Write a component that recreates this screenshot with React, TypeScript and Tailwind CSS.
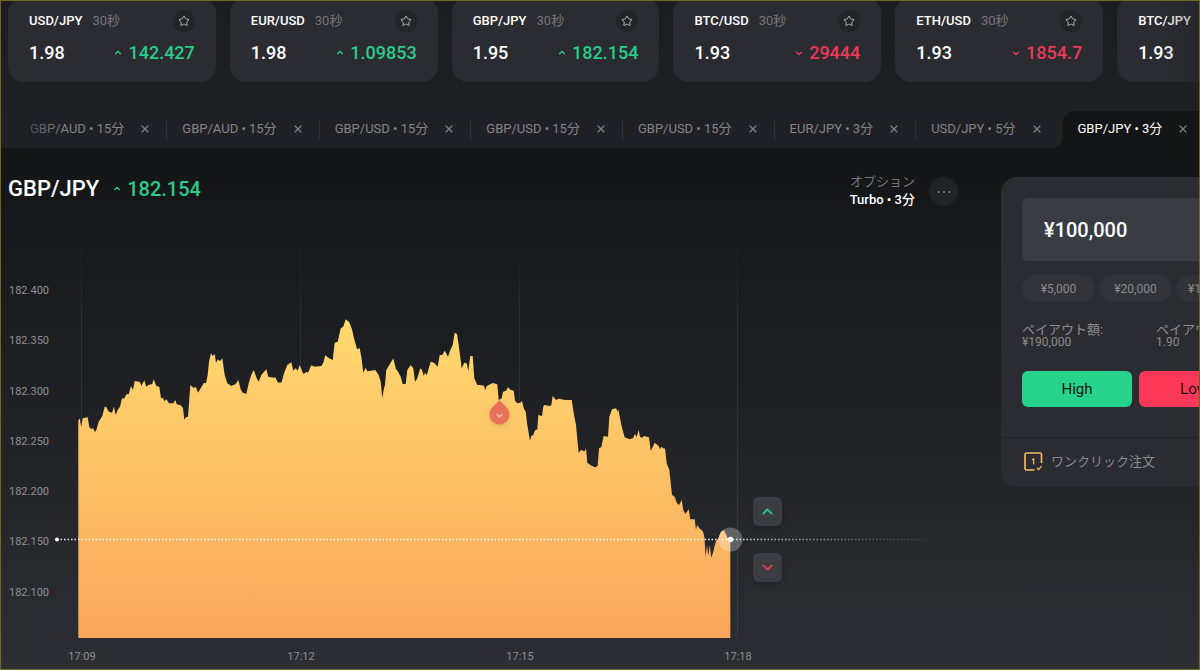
import React, { useState } from 'react';
import { ChevronDown, ChevronUp, Star, X } from 'lucide-react';
import { clsx } from 'clsx';

type Direction = 'up' | 'down';

interface Quote {
  pair: string;
  payout: string;
  price: string;
  direction: Direction;
}

interface Segment {
  origin: [number, number];
  points: string;
}

const quotes: Quote[] = [
  { pair: 'USD/JPY', payout: '1.98', price: '142.427', direction: 'up' },
  { pair: 'EUR/USD', payout: '1.98', price: '1.09853', direction: 'up' },
  { pair: 'GBP/JPY', payout: '1.95', price: '182.154', direction: 'up' },
  { pair: 'BTC/USD', payout: '1.93', price: '29444', direction: 'down' },
  { pair: 'ETH/USD', payout: '1.93', price: '1854.7', direction: 'down' },
  { pair: 'BTC/JPY', payout: '1.93', price: '4164900', direction: 'up' },
];

const tabs = [
  'GBP/AUD • 15分',
  'GBP/AUD • 15分',
  'GBP/USD • 15分',
  'GBP/USD • 15分',
  'GBP/USD • 15分',
  'EUR/JPY • 3分',
  'USD/JPY • 5分',
  'GBP/JPY • 3分',
];

const chips = ['¥5,000', '¥20,000', '¥100,000'];

const priceLabels = [
  { label: '182.400', y: 294 },
  { label: '182.350', y: 344 },
  { label: '182.300', y: 395 },
  { label: '182.250', y: 445 },
  { label: '182.200', y: 495 },
  { label: '182.150', y: 545 },
  { label: '182.100', y: 596 },
];

const timeLabels = [
  { label: '17:09', x: 82 },
  { label: '17:12', x: 301 },
  { label: '17:15', x: 520 },
  { label: '17:18', x: 738 },
];

// Ticks are stored per segment, in thirds of a chart unit from the segment origin
const segments: Segment[] = [
  {
    origin: [60, 310],
    points:
      '55,332 59,325 64,352 68,325 83,322 88,352 95,358 98,353 105,366 109,360 116,335 127,318 134,290 139,291 146,305 156,308 162,290 167,315 173,300 180,290 186,265 192,266 200,252 206,253 213,228 219,240 224,213 240,216 244,228 253,211 259,230 265,225 277,222 281,208 289,228 298,230 303,265 309,263 313,274 319,268 327,280 340,280 346,270 350,283 362,286 369,295 373,329 378,322 384,320 391,225 400,233 408,232 414,248 424,232 432,218 438,220 443,195 447,155 453,130 458,138 464,132 468,158 474,148 480,154 487,145 494,195 502,220 514,228 527,222 535,210 542,238 548,248 559,252 566,220 574,195 581,180 590,205 596,215 604,195 619,178 625,200 640,203 646,202 653,217',
  },
  {
    origin: [280, 310],
    points:
      '0,218 5,216 12,190 22,165 34,157 40,182 47,175 53,182 59,165 70,192 80,185 84,188 94,166 104,170 124,168 130,158 136,136 146,144 158,150 164,98 173,95 182,55 190,50 197,28 208,37 216,58 222,85 231,117 239,115 244,140 250,188 257,173 262,184 274,182 286,180 296,195 302,215 307,265 312,235 315,225 319,180 328,165 340,145 348,178 353,183 362,200 368,222 377,222 382,180 392,165 400,175 405,215 412,205 421,175 426,180 431,197 435,188 440,196 452,155 462,158 473,170 479,135 487,135 494,122 504,140 510,122 518,105 524,68 531,72 536,105 545,175 553,158 560,160 565,183 571,138 578,138 583,205 592,225',
  },
  {
    origin: [480, 370],
    points:
      '0,45 12,47 16,60 20,48 38,39 52,43 56,90 65,85 69,65 78,62 84,52 92,60 101,62 105,92 112,100 122,98 126,92 131,115 137,125 142,165 150,212 154,198 160,195 164,182 172,178 175,135 186,138 190,110 192,105 210,108 214,105 218,78 228,90 236,86 256,90 275,90 281,130 288,165 296,250 302,240 314,244 318,235 322,278 332,286 345,292 353,288 357,235 364,232 371,198 384,200 388,140 396,118 408,115 413,125 415,118 425,170 434,202 448,208 460,204 464,192 470,200 476,180 480,200 486,203 492,198 507,202 512,243 524,218 536,228 540,238 544,230 552,236',
  },
  {
    origin: [640, 430],
    points:
      '75,55 80,100 88,120 96,195 104,200 110,218 117,225 125,210 130,240 136,252 146,238 151,268 164,268 168,300 171,285 180,297 188,303 193,318 197,380 201,345 205,378 209,345 214,383 220,365 227,335 235,325 243,305 252,300 260,318 265,328 271,328',
  },
];

const BASELINE = 638;

const ticks = segments.flatMap(({ origin, points }) =>
  points.split(' ').map((point) => {
    const [x, y] = point.split(',').map(Number);
    return `${(origin[0] + x / 3).toFixed(1)},${(origin[1] + y / 3).toFixed(1)}`;
  })
);

const areaPath = `M78.3,${BASELINE} L${ticks.join(' L')} L730.3,${BASELINE} Z`;

function Trend({ direction }: { direction: Direction }) {
  return (
    <svg viewBox="0 0 8 8" className="size-2 shrink-0" fill="none" stroke="currentColor" strokeWidth="1.3">
      <path d={direction === 'up' ? 'M1.2 5 4 2.4 6.8 5' : 'M1.2 3 4 5.6 6.8 3'} />
    </svg>
  );
}

function QuoteCard({ quote }: { quote: Quote }) {
  return (
    <article className="rounded-2xl bg-[#2b2c31] px-[21px] pt-[13px] pb-[17px]">
      <div className="flex items-center">
        <h2 className="text-[13px] leading-5 font-medium text-white">{quote.pair}</h2>
        <span className="ml-2.5 text-[13px] leading-5 text-[#76777b]">30秒</span>
        <button
          type="button"
          aria-label={`${quote.pair} favorite`}
          className="ml-auto flex size-[22px] items-center justify-center rounded-full bg-[#232428] text-[#b4b5b8]"
        >
          <Star size={12} strokeWidth={2} />
        </button>
      </div>
      <div className="mt-[9px] flex items-center justify-between text-lg leading-6 font-medium">
        <span className="text-white">{quote.payout}</span>
        <span
          className={clsx(
            'flex items-center gap-1.5',
            quote.direction === 'up' ? 'text-[#2bcb8a]' : 'text-[#e83a58]'
          )}
        >
          <Trend direction={quote.direction} />
          {quote.price}
        </span>
      </div>
    </article>
  );
}

function TabBar() {
  const [active, setActive] = useState(tabs.length - 1);

  return (
    <nav className="relative flex h-[37px] pl-3.5 text-[13px]">
      {tabs.map((tab, index) => (
        <div
          key={index}
          className={clsx(
            'relative flex shrink-0 items-center gap-[15px] pr-4 pb-0.5 pl-[15px]',
            index === active ? 'ml-1 rounded-tl-xl bg-[#141517] text-white' : 'text-[#85868a]'
          )}
        >
          {index === active && (
            <span className="absolute bottom-0 -left-3 size-3 bg-[#141517]">
              <span className="block size-3 rounded-br-xl bg-[#202126]" />
            </span>
          )}
          <button type="button" onClick={() => setActive(index)} className="leading-5 whitespace-nowrap">
            {tab}
          </button>
          <button type="button" aria-label="閉じる" className="text-[#7f8084]">
            <X size={12} strokeWidth={2.5} />
          </button>
          {index < active - 1 && <span className="absolute right-0 h-5 w-px bg-[#303136]" />}
        </div>
      ))}
      <div className="pointer-events-none absolute inset-y-0 left-0 w-16 bg-linear-to-r from-[#202126] to-transparent" />
    </nav>
  );
}

function Chart() {
  return (
    <div className="relative">
      <svg viewBox="1 240 1000 429" className="block h-auto w-full">
        <defs>
          <linearGradient id="area" gradientUnits="userSpaceOnUse" x1="0" y1="320" x2="0" y2="638">
            <stop offset="0" stopColor="#ffd96f" />
            <stop offset="1" stopColor="#faa65c" />
          </linearGradient>
          <linearGradient id="grid" gradientUnits="userSpaceOnUse" x1="0" y1="240" x2="0" y2="320">
            <stop offset="0" stopColor="#fff" stopOpacity="0" />
            <stop offset="1" stopColor="#fff" stopOpacity="0.07" />
          </linearGradient>
          <linearGradient id="level" gradientUnits="userSpaceOnUse" x1="57" y1="0" x2="944" y2="0">
            <stop offset="0.76" stopColor="#fff" stopOpacity="0.9" />
            <stop offset="0.8" stopColor="#fff" stopOpacity="0.65" />
            <stop offset="1" stopColor="#fff" stopOpacity="0" />
          </linearGradient>
        </defs>

        {timeLabels.map(({ label, x }) => (
          <rect key={label} x={x - 1} y="240" width="1" height="398" fill="url(#grid)" />
        ))}

        <path d={areaPath} fill="url(#area)" />

        <g fill="#8f9094" fontSize="11">
          {priceLabels.map(({ label, y }) => (
            <text key={label} x="9" y={y}>
              {label}
            </text>
          ))}
          {timeLabels.map(({ label, x }) => (
            <text key={label} x={x} y="660" textAnchor="middle">
              {label}
            </text>
          ))}
        </g>

        {/* Open position */}
        <path
          d="M499.5 400 C502 404 509.5 407.5 509.5 414.5 A10 10 0 0 1 489.5 414.5 C489.5 407.5 497 404 499.5 400 Z"
          fill="#e8715a"
          className="drop-shadow-sm"
        />
        <path d="M496.5 414 499.5 416.8 502.5 414" fill="none" stroke="#fbc3b0" strokeWidth="1.3" />

        {/* Current price level */}
        <path d="M57 539.5H944" stroke="url(#level)" strokeWidth="1.4" strokeDasharray="1.6 1.9" />
        <circle cx="57" cy="539.5" r="2" fill="#fff" />
        <circle cx="730.5" cy="539.5" r="12" fill="#fff" fillOpacity="0.27" />
        <circle cx="730.5" cy="539.5" r="2.7" fill="#fff" />
      </svg>

      <div className="absolute top-[60%] left-[75.2%] flex flex-col gap-[27px]">
        <button
          type="button"
          aria-label="High"
          className="flex size-[29px] items-center justify-center rounded-md bg-[#3b3d43] text-[#2bcb8a] shadow-md"
        >
          <ChevronUp size={17} strokeWidth={2.5} />
        </button>
        <button
          type="button"
          aria-label="Low"
          className="flex size-[29px] items-center justify-center rounded-md bg-[#3b3d43] text-[#e83a58] shadow-md"
        >
          <ChevronDown size={17} strokeWidth={2.5} />
        </button>
      </div>
    </div>
  );
}

function OrderPanel() {
  const [amount, setAmount] = useState('¥100,000');

  return (
    <section className="w-[269px] rounded-2xl bg-[#2b2c31] text-[#8b8c90]">
      <div className="px-[21px] pt-[21px] pb-[30px]">
        <input
          type="text"
          aria-label="金額"
          value={amount}
          onChange={(e) => setAmount(e.target.value)}
          className="block h-[63px] w-full rounded-md bg-[#3a3c43] px-[22px] text-xl font-medium text-white outline-none"
        />
        <div className="mt-3.5 flex gap-1">
          {chips.map((chip) => (
            <button
              key={chip}
              type="button"
              onClick={() => setAmount(chip)}
              className="h-[27px] flex-1 rounded-full bg-[#323338] text-xs"
            >
              {chip}
            </button>
          ))}
        </div>
        <dl className="mt-[21px] flex text-xs leading-[13px]">
          <div className="w-[134px]">
            <dt className="text-[13px] leading-[13px]">ペイアウト額:</dt>
            <dd>¥190,000</dd>
          </div>
          <div>
            <dt className="text-[13px] leading-[13px]">ペイアウト率:</dt>
            <dd>1.90</dd>
          </div>
        </dl>
        <div className="mt-[22px] flex gap-[7px] text-[15px] text-[#101113]">
          <button type="button" className="h-9 flex-1 rounded-md bg-[#27d38c]">
            High
          </button>
          <button type="button" className="h-9 flex-1 rounded-md bg-[#fb3857]">
            Low
          </button>
        </div>
      </div>
      <button
        type="button"
        className="flex h-[50px] w-full items-center gap-2 border-t border-[#212226] px-[21px] pb-0.5 text-[13px]"
      >
        <svg viewBox="0 0 21 21" className="size-[21px]" fill="none" stroke="#f5c065" strokeWidth="1.6">
          <path d="M19.5 12V3.5A1.5 1.5 0 0 0 18 2H4.5A1.5 1.5 0 0 0 3 3.5V17.5A1.5 1.5 0 0 0 4.5 19H12.5" />
          <path d="M10 8.8 11.700 7.900V13.5" strokeWidth="1.2" />
          <path d="M15 17 16.6 18.6 19.6 15.2" strokeWidth="1.2" />
        </svg>
        ワンクリック注文
      </button>
    </section>
  );
}

export default function App() {
  return (
    <div className="flex min-h-screen flex-col overflow-hidden border border-[#6d6b22] bg-[#202126] font-[Roboto,'Noto_Sans_CJK_JP',sans-serif]">
      <header className="relative bg-linear-to-b from-[#1c1d20] to-[#202126]">
        <div className="-mt-1 mb-[29px] grid auto-cols-[17.45%] grid-flow-col gap-3.5 pl-[7px]">
          {quotes.map((quote) => (
            <QuoteCard key={quote.pair} quote={quote} />
          ))}
        </div>
        <div className="pointer-events-none absolute top-0 right-0 h-[82px] w-10 bg-linear-to-r from-transparent to-[#1e1f23]/40" />
        <TabBar />
      </header>

      <main className="flex flex-1 bg-linear-to-b from-[#141517] to-[#2d2e33]">
        <div className="min-w-0 flex-1">
          <div className="flex h-[92px] items-start pt-[29px] pr-[43px] pl-[7px]">
            <h1 className="text-[22px] leading-6 font-medium text-white">GBP/JPY</h1>
            <p className="ml-3.5 flex items-center gap-1.5 text-xl leading-6 font-medium text-[#2bcb8a]">
              <Trend direction="up" />
              182.154
            </p>
            <div className="ml-auto text-right text-[13px]">
              <p className="leading-[10px] text-[#76777b]">オプション</p>
              <p className="mt-[5px] leading-4 font-medium text-white">Turbo • 3分</p>
            </div>
            <button
              type="button"
              aria-label="メニュー"
              className="ml-3.5 flex size-[29px] items-center justify-center rounded-full bg-[#212226]"
            >
              <svg viewBox="0 0 14 4" className="h-1 w-3.5" fill="#96979b">
                <circle cx="1.5" cy="2" r="0.9" />
                <circle cx="7" cy="2" r="0.9" />
                <circle cx="12.5" cy="2" r="0.9" />
              </svg>
            </button>
          </div>
          <Chart />
        </div>
        <aside className="w-[198px] shrink-0 pt-[29px]">
          <OrderPanel />
        </aside>
      </main>
    </div>
  );
}
